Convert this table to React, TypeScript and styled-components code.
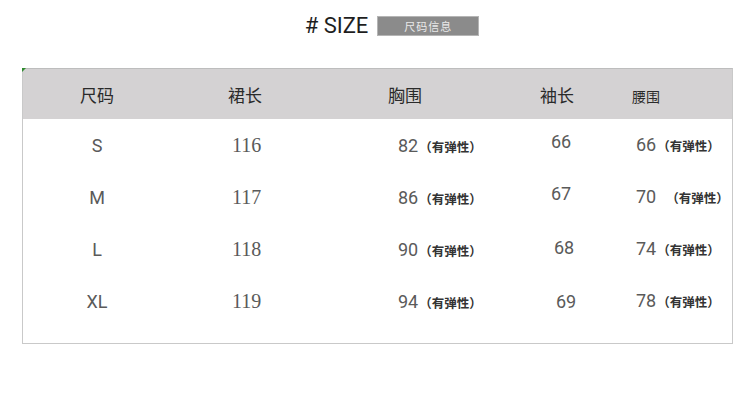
import React from 'react';
import styled, { createGlobalStyle } from 'styled-components';

const GlobalStyle = createGlobalStyle`
  body {
    margin: 0;
    background: #ffffff;
    font-family: Roboto, "Noto Sans CJK SC", sans-serif;
  }
`;

const Page = styled.div`
  width: 750px;
  height: 420px;
  padding-top: 14px;
  box-sizing: border-box;
`;

const TitleBar = styled.div`
  display: flex;
  justify-content: center;
  align-items: center;
  gap: 9px;
  padding-left: 34px;
`;

const Title = styled.h2`
  margin: 0;
  font-family: Roboto, sans-serif;
  font-size: 22px;
  font-weight: 400;
  color: #1e1e1e;
  line-height: 24px;
`;

const Badge = styled.span`
  display: flex;
  align-items: center;
  justify-content: center;
  width: 100px;
  height: 18px;
  background: #8b8b8b;
  border: 1px solid #b5b5b5;
  color: #e9e9e9;
  font-family: "Noto Sans CJK SC", sans-serif;
  font-size: 11px;
  letter-spacing: 1px;
`;

const Table = styled.div`
  position: relative;
  margin: 30px 0 0 22px;
  width: 709px;
  border: 1px solid #c9c9c9;
  border-top-color: #bdbdbd;
  padding-bottom: 16px;

  &::before {
    content: '';
    position: absolute;
    left: -1px;
    top: -1px;
    border-top: 4px solid #2f8a2f;
    border-right: 4px solid transparent;
  }
`;

// column widths shared by the header and the body rows
const Row = styled.div<{ $head?: boolean }>`
  display: grid;
  grid-template-columns: 148px 152px 177px 120px 1fr;
  height: ${(p) => (p.$head ? 50 : 52)}px;
  background: ${(p) => (p.$head ? '#d4d2d3' : 'transparent')};
  align-items: center;
`;

const Head = styled.div<{ $pad?: number; $small?: boolean }>`
  text-align: ${(p) => (p.$pad === undefined ? 'center' : 'left')};
  padding-left: ${(p) => p.$pad ?? 0}px;
  padding-top: ${(p) => (p.$small ? 4 : 0)}px;
  font-family: "Noto Sans CJK SC", sans-serif;
  font-size: ${(p) => (p.$small ? 14 : 17)}px;
  color: #2a2a2a;
`;

const Cell = styled.div<{ $pad?: number; $lift?: number }>`
  text-align: ${(p) => (p.$pad === undefined ? 'center' : 'left')};
  padding-left: ${(p) => p.$pad ?? 0}px;
  margin-bottom: ${(p) => p.$lift ?? 0}px;
  font-family: Roboto, sans-serif;
  font-size: 18px;
  color: #5a5a5a;
  white-space: nowrap;
  display: flex;
  align-items: baseline;
  justify-content: ${(p) => (p.$pad === undefined ? 'center' : 'flex-start')};
`;

const Num = styled.span<{ $serif?: boolean }>`
  font-family: ${(p) => (p.$serif ? '"Liberation Serif", serif' : 'Roboto, sans-serif')};
  font-size: ${(p) => (p.$serif ? 20 : 18)}px;
`;

const Stretch = styled.span<{ $gap?: number }>`
  font-family: "Noto Sans CJK SC", sans-serif;
  font-size: 12.5px;
  font-weight: 700;
  color: #333;
  margin-left: ${(p) => p.$gap ?? 1}px;
`;

type SizeRow = {
  size: string;
  length: number;
  chest: number;
  sleeve: number;
  waist: number;
  sleeveLift: number;
  sleevePad: number;
  waistGap: number;
};

const rows: SizeRow[] = [
  { size: 'S', length: 116, chest: 82, sleeve: 66, waist: 66, sleeveLift: 8, sleevePad: 51, waistGap: 1 },
  { size: 'M', length: 117, chest: 86, sleeve: 67, waist: 70, sleeveLift: 8, sleevePad: 51, waistGap: 10 },
  { size: 'L', length: 118, chest: 90, sleeve: 68, waist: 74, sleeveLift: 4, sleevePad: 54, waistGap: 1 },
  { size: 'XL', length: 119, chest: 94, sleeve: 69, waist: 78, sleeveLift: 0, sleevePad: 56, waistGap: 1 },
];

const App: React.FC = () => {
  return (
    <Page>
      <GlobalStyle />
      <TitleBar>
        <Title># SIZE</Title>
        <Badge>尺码信息</Badge>
      </TitleBar>
      <Table>
        <Row $head>
          <Head>尺码</Head>
          <Head $pad={57}>裙长</Head>
          <Head $pad={65}>胸围</Head>
          <Head $pad={40}>袖长</Head>
          <Head $pad={12} $small>腰围</Head>
        </Row>
        {rows.map((r) => (
          <Row key={r.size}>
            <Cell>{r.size}</Cell>
            <Cell $pad={61}>
              <Num $serif>{r.length}</Num>
            </Cell>
            <Cell $pad={75}>
              <Num>{r.chest}</Num>
              <Stretch>（有弹性）</Stretch>
            </Cell>
            <Cell $pad={r.sleevePad} $lift={r.sleeveLift}>
              <Num>{r.sleeve}</Num>
            </Cell>
            <Cell $pad={16} $lift={2}>
              <Num>{r.waist}</Num>
              <Stretch $gap={r.waistGap}>（有弹性）</Stretch>
            </Cell>
          </Row>
        ))}
      </Table>
    </Page>
  );
};

export default React.memo(App);
